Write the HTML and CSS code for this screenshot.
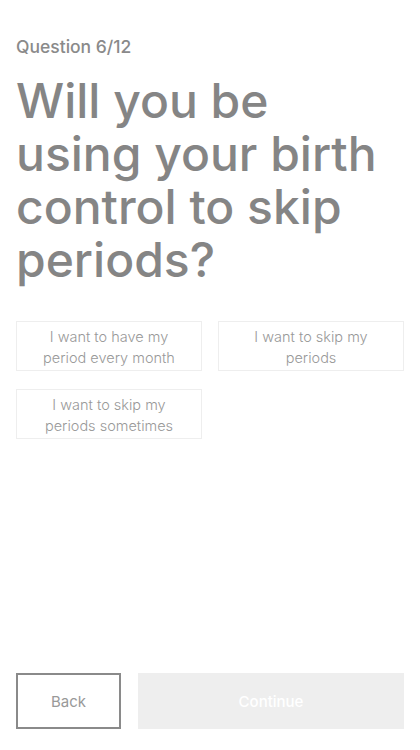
FILE: index.html
```html
<!DOCTYPE html>
<html>
<head>
    <title>Question 6/12</title>
    <meta name="viewport" content="width=device-width, initial-scale=1.0">
    <link rel="stylesheet" href="styles.css">
</head>
<body>
    <div class="page">
        <div class="question">
            <p class="counter">Question 6/12</p>
            <h1 class="title">Will you be using your birth control to skip periods?</h1>
            <div class="options">
                <button class="option">I want to have my period every month</button>
                <button class="option">I want to skip my periods</button>
                <button class="option">I want to skip my periods sometimes</button>
            </div>
        </div>
        <div class="actions">
            <button class="back">Back</button>
            <button class="continue" disabled>Continue</button>
        </div>
    </div>
</body>
</html>
```

FILE: styles.css
```css
body {
    font-family: Inter, "Open Sans", sans-serif;
    background-color: #fff;
    margin: 0;
}

.page {
    height: 750px;
    box-sizing: border-box;
    padding: 36px 16px 21px;
    display: flex;
    flex-direction: column;
    justify-content: space-between;
}

.counter {
    margin: 0;
    font-size: 17.5px;
    font-weight: 500;
    color: #8a8a8a;
}

.title {
    margin: 17px 0 0;
    max-width: 384px;
    font-size: 48px;
    line-height: 53px;
    font-weight: 500;
    letter-spacing: 0;
    color: #858585;
}

.options {
    margin-top: 35px;
    display: grid;
    grid-template-columns: 1fr 1fr;
    column-gap: 16px;
    row-gap: 18px;
}

.option {
    font-family: inherit;
    font-size: 14.5px;
    font-weight: 300;
    line-height: 21px;
    color: #999;
    background: #fff;
    border: 1px solid #eee;
    padding: 4px 14px;
    height: 50px;
    text-align: center;
}

.actions {
    display: flex;
    gap: 17px;
}

.actions button {
    font-family: inherit;
    font-size: 15px;
    height: 56px;
}

.back {
    width: 105px;
    background: #fff;
    border: 2px solid #8a8a8a;
    color: #999;
}

.continue {
    flex: 1;
    background: #eee;
    border: none;
    color: #fff;
    font-weight: 500;
}
```
